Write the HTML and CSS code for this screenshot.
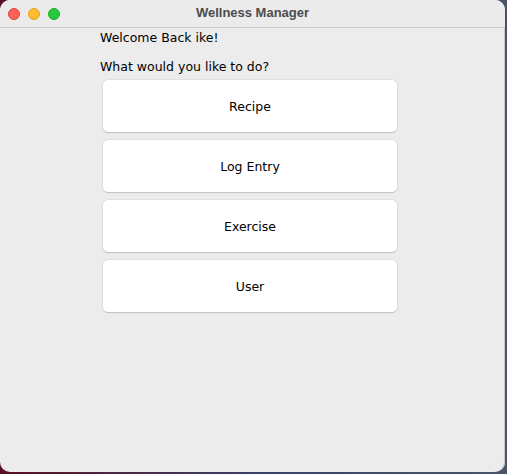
FILE: index.html
```html
<!DOCTYPE html>
<html>
<head>
<meta charset="utf-8">
<link rel="stylesheet" href="styles.css">
</head>
<body>
<div class="window">
  <div class="titlebar">
    <div class="lights">
      <span class="light red"></span>
      <span class="light yellow"></span>
      <span class="light green"></span>
    </div>
    <div class="title">Wellness Manager</div>
  </div>
  <div class="content">
    <div class="welcome">Welcome Back ike!</div>
    <div class="prompt">What would you like to do?</div>
    <div class="buttons">
      <button class="btn">Recipe</button>
      <button class="btn">Log Entry</button>
      <button class="btn">Exercise</button>
      <button class="btn">User</button>
    </div>
  </div>
</div>
</body>
</html>
```

FILE: styles.css
```css
html, body {
  margin: 0;
  padding: 0;
}
body {
  width: 507px;
  height: 474px;
  background: linear-gradient(90deg, #5a1020 0%, #3a3f6a 50%, #4a5468 100%);
  font-family: "DejaVu Sans", "Noto Sans", sans-serif;
  overflow: hidden;
}
.window {
  width: 505px;
  height: 472px;
  background: #ececec;
  border-radius: 10px;
  overflow: hidden;
  box-shadow: inset -1px 0 0 #c8c8c8;
}
.titlebar {
  height: 27px;
  background: #ebebeb;
  border-bottom: 1px solid #c9c9c9;
  display: flex;
  align-items: center;
  position: relative;
}
.lights {
  display: flex;
  gap: 8px;
  padding-left: 8px;
}
.light {
  width: 12px;
  height: 12px;
  border-radius: 50%;
  display: block;
  box-sizing: border-box;
}
.red { background: #fe5f57; border: 0.5px solid #e0443e; }
.yellow { background: #febc2e; border: 0.5px solid #dea123; }
.green { background: #28c840; border: 0.5px solid #1aab29; }
.title {
  position: absolute;
  left: 0;
  right: 0;
  top: 0;
  line-height: 26px;
  text-align: center;
  font-weight: bold;
  font-size: 13px;
  color: #4c4c4c;
  font-family: "Liberation Sans", "Noto Sans", sans-serif;
}
.content {
  padding-left: 100px;
  font-size: 12.5px;
  color: #000;
}
.welcome {
  height: 20px;
  line-height: 20px;
}
.prompt {
  margin-top: 9px;
  line-height: 20px;
  height: 20px;
}
.buttons {
  display: flex;
  flex-direction: column;
  gap: 8px;
  margin-left: 3px;
  margin-top: 3px;
  width: 294px;
}
.btn {
  height: 52px;
  background: #ffffff;
  border: none;
  border-radius: 5px;
  box-shadow: 0 0 0 0.5px #d4d4d4, 0 1px 1px rgba(0,0,0,0.25);
  font-family: "DejaVu Sans", "Noto Sans", sans-serif;
  font-size: 12.5px;
  color: #000;
  padding: 0;
}
```
